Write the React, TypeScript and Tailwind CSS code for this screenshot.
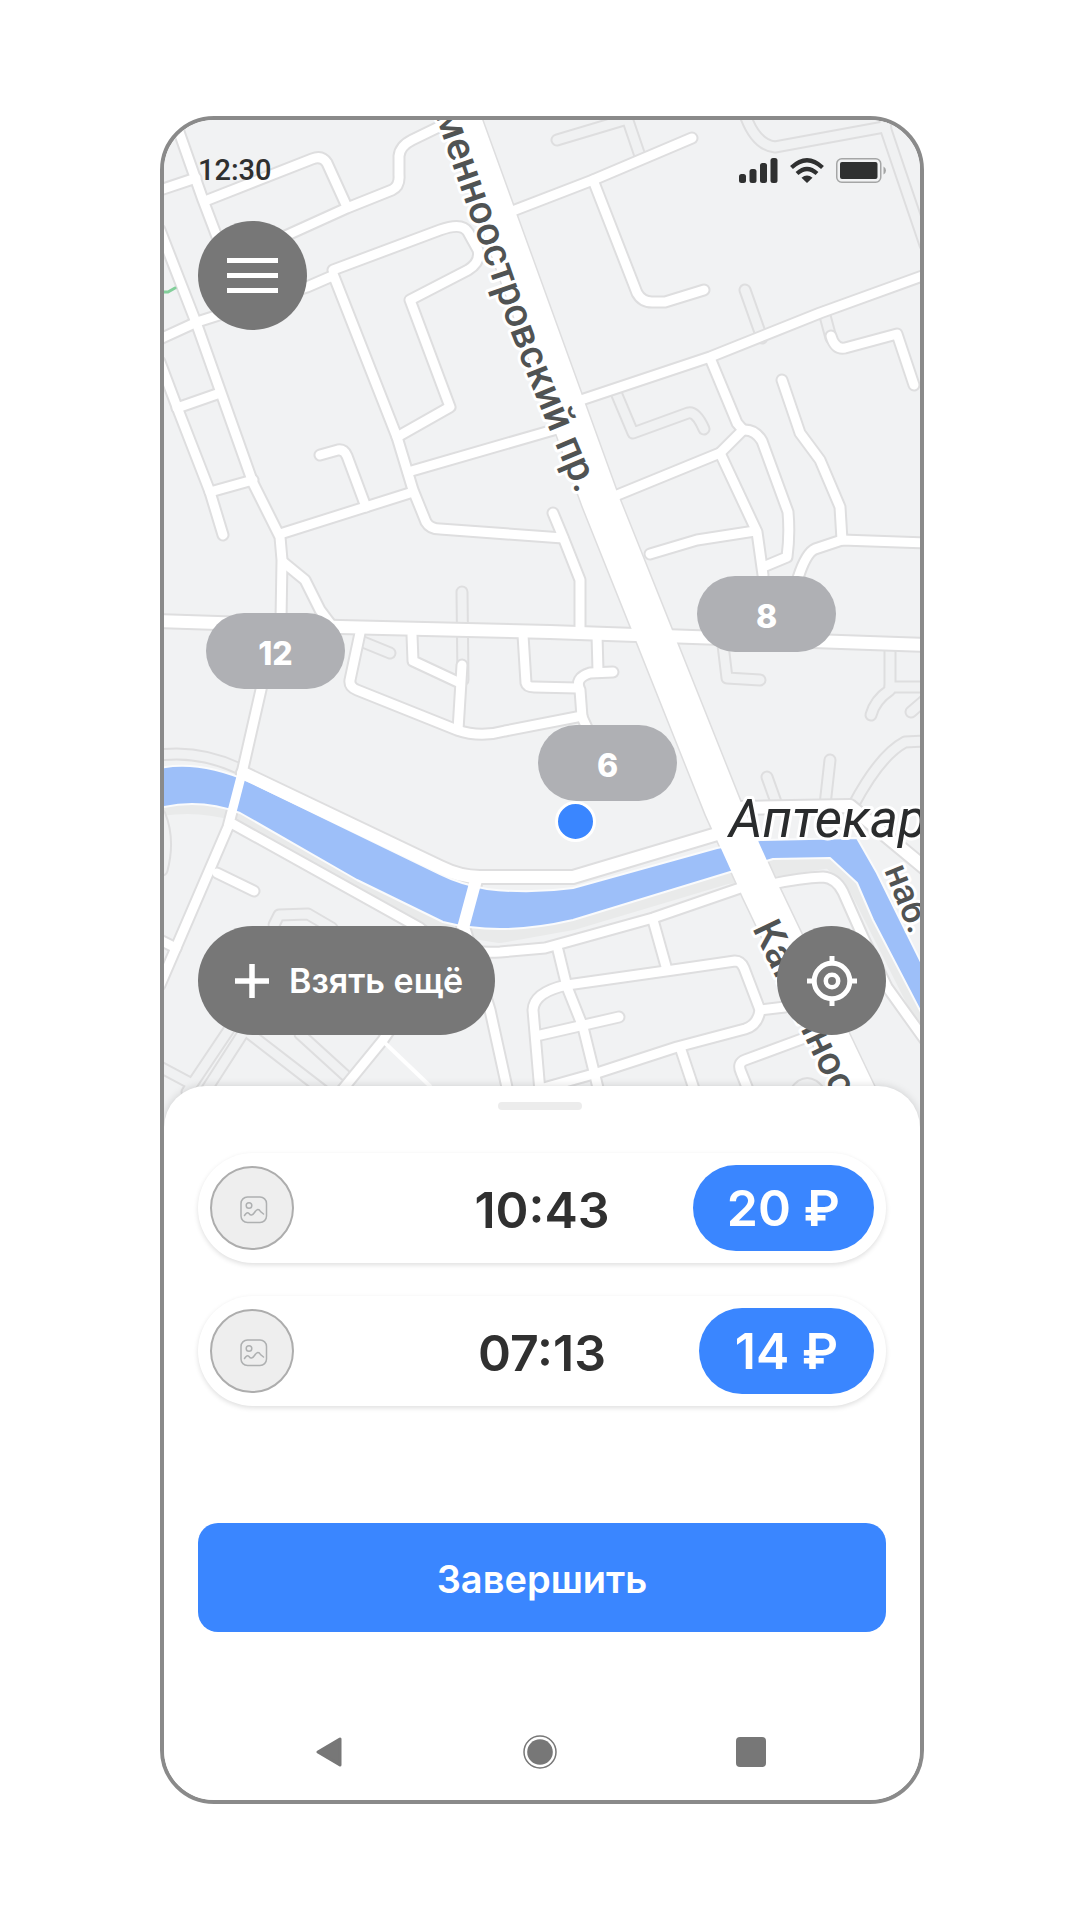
import React from "react";

const whiteRoads = [
  "M172 112 L203 200 L222 250",
  "M160 190 L196 178",
  "M205 201 L312 159 Q322 155 327 163 L347 207",
  "M283 237 L347 208 L392 190 Q400 186 399 175 L399 156 Q400 146 412 140 L445 124",
  "M160 230 L197 325 L220 390 L253 483 L280 537 L282 560 L281 620",
  "M160 339 L197 322 L307 287 L330 277",
  "M333 270 L440 230 Q462 222 468 232 L478 250 Q481 262 468 270 L410 300 L450 407 L397 437",
  "M333 274 L397 437 L413 490 L426 522 Q430 529 440 529 L563 538",
  "M408 472 L550 431 L575 424",
  "M160 362 L177 407 L210 492 L223 535",
  "M177 408 L220 393",
  "M210 492 L253 480",
  "M320 455 L338 450 Q344 449 347 456 L366 507",
  "M280 534 L413 492",
  "M510 212 L593 180 L692 138",
  "M593 180 L637 293 Q642 302 652 302 L665 302 L704 290",
  "M575 402 L710 357 L820 313 L925 275",
  "M710 358 L737 423 L743 430 L720 453 L610 498",
  "M720 453 L757 532 L763 575",
  "M650 554 L697 540 L755 531",
  "M743 430 Q755 429 762 441 L788 512 Q790 535 787 557 L763 567",
  "M782 380 L800 433 L820 460 L840 507 L842 540",
  "M925 543 L842 540 L815 549 Q806 553 798 578",
  "M831 336 Q835 350 845 348 L897 334 L914 385",
  "M283 562 L305 580 L320 610 L332 626",
  "M360 633 L350 680 Q349 687 357 690 L457 730 Q480 738 505 731 L582 716",
  "M412 635 L413 661 L460 683",
  "M462 665 L458 730",
  "M523 635 L526 683 Q527 687 534 687 L577 688",
  "M613 672 L590 673 Q574 678 580 690 L582 717 L588 730",
  "M597 635 L598 671",
  "M553 513 L563 537 L580 580 L580 630",
  "M270 650 L242 773 L228 827 L160 985",
  "M233 824 L420 928 Q450 955 500 952 L545 948 L653 918 L746 886",
  "M217 873 L254 891",
  "M160 940 L176 948",
  "M772 884 Q800 878 823 877 Q836 878 843 892 L863 937 L887 987 L925 1040",
  "M558 950 L567 987 L583 1027 L599 1092",
  "M653 920 L667 970",
  "M785 1007 L760 1010",
  "M540 1092 L533 1010 Q534 992 567 985 L673 970 L735 961 Q741 961 744 968 L760 1010 Q758 1025 745 1029 L677 1047 L597 1073 L540 1089",
  "M536 1036 L619 1017",
  "M680 1047 L695 1092",
  "M810 1036 L745 1060 Q737 1063 741 1072 L749 1092",
  "M464 925 L490 1010 L508 1092",
  "M400 1015 L383 1040 L338 1095",
];

const wideRoads = [
  "M160 621 L340 627 L550 632 L925 645",
  "M243 773 L440 867 Q460 877 480 877 L573 877 L717 834 L745 826",
  "M476 880 L463 928",
  "M740 808 L850 806 L925 868",
];

const outlineRoads = [
  "M745 290 L762 338",
  "M617 395 L633 433 L688 413 Q696 411 704 429",
  "M557 140 L624 120",
  "M625 112 L640 156",
  "M744 112 Q755 145 775 147 L884 127",
  "M884 112 L886 130 L925 245",
  "M824 312 L831 338",
  "M462 592 L463 680",
  "M363 642 L390 653",
  "M723 645 L727 678 L760 680",
  "M890 645 L890 690 Q875 700 871 715",
  "M890 687 L925 687",
  "M925 700 L911 712",
  "M830 760 L825 805",
  "M767 777 L777 805",
  "M853 806 Q880 755 905 742 L925 741",
  "M160 755 Q200 750 240 769",
  "M232 1025 L187 1092",
  "M245 1030 L205 1092",
  "M160 1067 L190 1083",
  "M250 1034 L325 1092",
  "M300 1034 L345 1075",
  "M274 925 L279 915 L308 914 L332 928",
  "M160 815 Q170 840 162 870",
  "M795 1092 Q807 1075 820 1092",
];

function CityMap() {
  return (
    <svg
      className="absolute inset-0 h-full w-full"
      viewBox="164 120 756 1006"
      preserveAspectRatio="xMinYMin slice"
      fontFamily="Roboto, sans-serif"
      fill="none"
      role="img"
      aria-label="Карта"
    >
      <rect x="0" y="0" width="2400" height="1300" fill="#f1f2f3" />
      <g strokeLinecap="round" strokeLinejoin="round">
        <path d="M160 806 Q200 800 240 812 L357 880 L443 924 L500 933 L573 920 L727 874 L830 858 L857 883 L925 1018" stroke="#e9eaea" strokeWidth="20" />
        {outlineRoads.map((d) => <path key={d} d={d} stroke="#dededf" strokeWidth="13" />)}
        {outlineRoads.map((d) => <path key={d} d={d} stroke="#f0f1f2" strokeWidth="9" />)}
        {whiteRoads.map((d) => <path key={d} d={d} stroke="#dededf" strokeWidth="13" />)}
        {wideRoads.map((d) => <path key={d} d={d} stroke="#dededf" strokeWidth="16" />)}
        <path d="M448 80 L600 500 L652 630 L723 808 L760 890 L865 1110" stroke="#dededf" strokeWidth="40" />
        <path
          d="M160 768 Q200 760 250 782 L440 874 Q460 884 487 889 Q530 894 573 888 L717 848 L760 840 L857 838 L877 873 L925 970 L925 1020 L873 920 L857 883 L830 858 L773 859 L727 873 L573 920 Q500 937 443 922 L357 880 L240 813 Q200 798 160 808 Z"
          fill="#9dbff9"
          stroke="#fafbfc"
          strokeWidth="2"
        />
        {whiteRoads.map((d) => <path key={d} d={d} stroke="#ffffff" strokeWidth="9" />)}
        {wideRoads.map((d) => <path key={d} d={d} stroke="#ffffff" strokeWidth="12" />)}
        <path d="M448 80 L600 500 L652 630 L723 808 L760 890 L865 1110" stroke="#ffffff" strokeWidth="37" />
        <path d="M385 1043 L430 1086" stroke="#ffffff" strokeWidth="4" />
        <path d="M160 292 L168 292 L175 288" stroke="#82cf9a" strokeWidth="3" />
      </g>
      <defs>
        <path id="avenue" d="M435 114 L509 328 Q530 385 584 512" />
        <path id="avenueSouth" d="M752 928 L850 1132" />
        <path id="quay" d="M884 870 L935 998" />
      </defs>
      <g fill="#505353" stroke="#ffffff" strokeWidth="6" paintOrder="stroke" strokeLinejoin="round" fontSize="40" fontWeight="500">
        <text><textPath href="#avenue">менноостровский пр.</textPath></text>
        <text><textPath href="#avenueSouth">Каменноос</textPath></text>
        <text fontSize="36"><textPath href="#quay">наб.</textPath></text>
        <text x="729" y="837" fill="#2a2c2d" fontSize="53" fontStyle="italic" fontWeight="400">Аптекар</text>
      </g>
    </svg>
  );
}

function MapPin({ count, place }: { count: number; place: string }) {
  return (
    <button className={`absolute flex h-[76px] w-[139px] items-center justify-center rounded-full bg-[#afb0b4] pt-1.5 text-[32px] font-extrabold text-white ${place}`}>
      {count}
    </button>
  );
}

function StatusIcons() {
  return (
    <div className="flex items-center gap-3">
      <svg className="h-[25px] w-[39px]" viewBox="0 0 39 25" fill="#2f3030">
        <rect x="0" y="16" width="7" height="9" rx="2.5" />
        <rect x="10.5" y="11" width="7" height="14" rx="2.5" />
        <rect x="21" y="5" width="7" height="20" rx="2.5" />
        <rect x="31.500" y="0" width="7" height="25" rx="2.5" />
      </svg>
      <svg className="h-[25px] w-[34px]" viewBox="0 0 34 25" fill="none" stroke="#2f3030" strokeWidth="4.200">
        <path d="M1.500 9.500 Q17 -5 32.500 9.500" />
        <path d="M7 15.500 Q17 6.500 27 15.500" />
        <path d="M17 25 L11.500 19.800 Q17 15 22.500 19.800 Z" fill="#2f3030" stroke="none" />
      </svg>
      <svg className="h-[25px] w-[50px]" viewBox="0 0 50 25" fill="none">
        <rect x="0.750" y="0.750" width="44" height="23.500" rx="5" stroke="#a5a6a6" strokeWidth="1.500" />
        <rect x="4" y="4" width="37.500" height="17" rx="2" fill="#2f3030" />
        <path d="M47.500 8.500 Q50 10 50 12.500 Q50 15 47.500 16.500 Z" fill="#a5a6a6" />
      </svg>
    </div>
  );
}

function RentalCard({ time, price }: { time: string; price: string }) {
  return (
    <li className="grid h-[110px] grid-cols-3 items-center rounded-full bg-white px-3 shadow-[0_2px_5px_rgba(0,0,0,0.13)]">
      <span className="flex size-[84px] items-center justify-center rounded-full border-2 border-[#adadad] bg-[#eeeeee] pl-1 pt-1">
        <svg className="size-7" viewBox="0 0 28 28" fill="none" stroke="#aeb0b1" strokeWidth="1.500" strokeLinecap="round">
          <rect x="1" y="1" width="25.500" height="25.500" rx="6.500" />
          <circle cx="9" cy="9.500" r="2.800" />
          <path d="M4.500 19.500 Q7 15.500 9 17.500 Q11.500 21 14.500 16.500 Q18 11 20.500 15.500 L23.500 18" />
        </svg>
      </span>
      <time className="pt-1 text-center text-[50px] leading-none font-semibold text-[#303030]">{time}</time>
      <span className="flex h-[86px] min-w-[175px] items-center justify-center justify-self-end rounded-full bg-[#3a86ff] px-[34px] text-[50px] leading-none font-semibold whitespace-nowrap text-white">
        {price}
      </span>
    </li>
  );
}

export default function App() {
  return (
    <main className="bg-white pt-29 pr-39 pb-29 pl-40 font-['Inter',sans-serif]">
      <div className="flex min-h-[1688px] flex-col overflow-hidden rounded-[54px] border-4 border-[#8a8a8a] bg-white">
        <section className="relative flex h-[1006px] flex-col px-[34px] pt-[38px] pb-[91px]">
          <CityMap />
          <MapPin count={12} place="left-[42px] top-[493px]" />
          <MapPin count={8} place="left-[533px] top-[456px]" />
          <MapPin count={6} place="left-[374px] top-[605px]" />
          <span className="absolute left-[391px] top-[681px] size-[41px] rounded-full border-3 border-white bg-[#3a86ff]" />
          <header className="relative flex h-[25px] items-center justify-between">
            <span className="font-['Roboto',sans-serif] text-[29px] leading-none font-medium text-[#2f3030]">12:30</span>
            <StatusIcons />
          </header>
          <button aria-label="Меню" className="relative mt-[38px] flex size-[109px] flex-col items-center justify-center gap-[10px] rounded-full bg-[#777777]">
            <span className="h-[5px] w-[51px] bg-white" />
            <span className="h-[5px] w-[51px] bg-white" />
            <span className="h-[5px] w-[51px] bg-white" />
          </button>
          <div className="relative mt-auto flex items-center justify-between">
            <button className="flex h-[109px] items-center gap-5 rounded-full bg-[#777777] pr-8 pl-[37px] text-[34px] font-semibold text-white">
              <svg className="size-[34px]" viewBox="0 0 34 34" stroke="#ffffff" strokeWidth="5.500">
                <path d="M17 0 V34 M0 17 H34" />
              </svg>
              Взять ещё
            </button>
            <button aria-label="Моё местоположение" className="flex size-[109px] items-center justify-center rounded-full bg-[#777777]">
              <svg className="size-[50px]" viewBox="0 0 50 50" fill="none" stroke="#ffffff" strokeWidth="5">
                <circle cx="25" cy="25" r="17.800" />
                <circle cx="25" cy="25" r="6.200" strokeWidth="4.500" />
                <path d="M25 0 V7 M25 43 V50 M0 25 H7 M43 25 H50" />
              </svg>
            </button>
          </div>
        </section>

        <section className="relative -mt-10 flex flex-1 flex-col rounded-t-[42px] bg-white px-[34px] pt-4 pb-6 shadow-[0_0_8px_rgba(0,0,0,0.15)]">
          <div className="flex justify-center pr-1">
            <div className="h-2 w-[84px] rounded-full bg-[#ececec]" />
          </div>
          <ul className="mt-[43px] flex flex-col gap-[33px]">
            <RentalCard time="10:43" price="20 ₽" />
            <RentalCard time="07:13" price="14 ₽" />
          </ul>
          <button className="mt-[117px] h-[109px] rounded-[20px] bg-[#3a86ff] pt-1 text-[38px] font-semibold text-white">
            Завершить
          </button>
          <nav className="mt-auto flex justify-center gap-[163px] pr-1 text-[#777777]">
            <button aria-label="Назад" className="flex size-12 items-center justify-center">
              <svg className="h-[30px] w-[26px]" viewBox="0 0 26 30" fill="currentColor" stroke="currentColor" strokeWidth="3" strokeLinejoin="round">
                <path d="M2 15 L24 2 V28 Z" />
              </svg>
            </button>
            <button aria-label="Домой" className="flex size-12 items-center justify-center">
              <svg className="size-[34px]" viewBox="0 0 34 34" fill="currentColor">
                <circle cx="17" cy="17" r="16" fill="none" stroke="currentColor" strokeWidth="1.500" />
                <circle cx="17" cy="17" r="12.800" />
              </svg>
            </button>
            <button aria-label="Недавние" className="flex size-12 items-center justify-center">
              <span className="size-[30px] rounded bg-current" />
            </button>
          </nav>
        </section>
      </div>
    </main>
  );
}
